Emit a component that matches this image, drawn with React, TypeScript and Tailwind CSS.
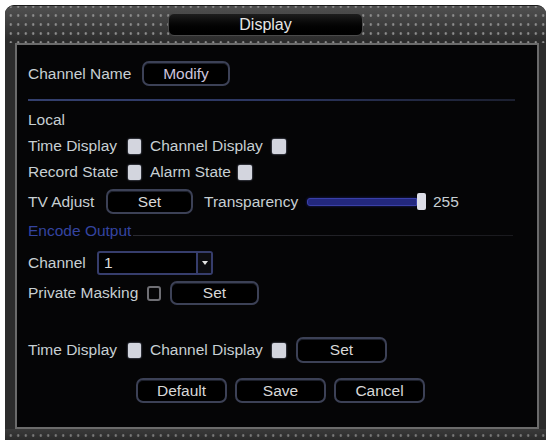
import React from 'react';

const font = "font-['Liberation_Sans',Arial,sans-serif]";

const Btn: React.FC<{ label: string; w: string; h?: string; tint?: string; className?: string }> = ({ label, w, h = 'h-[25px]', tint = 'text-[#d8d8d8]', className = '' }) => (
  <div className={`${w} ${h} ${tint} ${className} shrink-0 flex items-center justify-center rounded-[7px] border-2 border-[#3c4156] bg-black shadow-[inset_0_1px_0_#1c1f2a] text-[15.5px] leading-none`}>
    {label}
  </div>
);

const Check: React.FC<{ className?: string }> = ({ className = '' }) => (
  <div className={`w-[13px] h-[15px] shrink-0 rounded-[2px] bg-[#d3d5de] shadow-[0_0_2px_#9aa0b8] ${className}`} />
);

export default function App() {
  return (
    <div className={`w-[546px] h-[440px] bg-white pl-[5px] pt-[5px] overflow-hidden ${font}`}>
      <div className="w-[541px] h-[435px] rounded-t-[9px] bg-[#2c2c2c] flex flex-col overflow-hidden border-t border-[#1a1a1a]">
        {/* header */}
        <div className="h-[37px] shrink-0 bg-[radial-gradient(circle,#8e8e8e_1px,transparent_1.5px),linear-gradient(#505050,#2a2a2a)] bg-size-[7.5px_9px,100%_100%] bg-position-[2px_5px,0_0] flex items-center">
          <div className="ml-[163px] w-[195px] h-[23px] rounded-[6px] bg-gradient-to-b from-[#1e1e1e] to-black border border-[#4a4a4a] flex items-center justify-center text-[#e6e6e6] text-[16px]">
            Display
          </div>
        </div>

        {/* body */}
        <div className="ml-[10px] mr-[7px] h-[386px] shrink-0 border-2 border-[#6b6b6b] bg-[#050506] flex flex-col pl-[11px] text-[#c7cfd3] text-[15.5px] leading-[20px]">
          <div className="mt-[16px] h-[25px] flex items-center">
            <span className="w-[114px]">Channel Name</span>
            <Btn label="Modify" w="w-[88px]" tint="text-[#cdc3dd]" />
          </div>

          <div className="mt-[13px] h-[2px] w-[487px] bg-gradient-to-r from-[#34406e] via-[#2c3660] to-[#1c2030]" />

          <div className="mt-[9px] h-[20px]">Local</div>

          <div className="mt-[6px] h-[20px] flex items-center">
            <span className="w-[100px]">Time Display</span>
            <Check />
            <span className="ml-[9px] w-[122px]">Channel Display</span>
            <Check className="w-[14px]" />
          </div>

          <div className="mt-[6px] h-[20px] flex items-center">
            <span className="w-[100px]">Record State</span>
            <Check />
            <span className="ml-[9px] w-[88px]">Alarm State</span>
            <Check className="w-[14px]" />
          </div>

          <div className="mt-[7px] h-[25px] flex items-center">
            <span className="w-[78px]">TV Adjust</span>
            <Btn label="Set" w="w-[87px]" />
            <span className="ml-[11px] w-[103px]">Transparency</span>
            <div className="w-[110px] h-[8px] rounded-l-[3px] bg-[#23287e] border border-[#3a40a8] shadow-[0_0_3px_#1a1f6a]" />
            <div className="w-[9px] h-[17px] rounded-[2px] bg-[#dcdde6]" />
            <span className="ml-[7px]">255</span>
          </div>

          <div className="mt-[7px] h-[20px] flex items-center">
            <span className="text-[#3444a0]">Encode Output</span>
            <div className="ml-[2px] mt-[8px] w-[380px] h-[1px] bg-gradient-to-r from-[#2a2a30] to-[#1a1a1e]" />
          </div>

          <div className="mt-[10px] h-[24px] flex items-center">
            <span className="w-[69px]">Channel</span>
            <div className="w-[116px] h-[24px] rounded-[3px] border-2 border-[#363d6c] bg-black flex items-stretch">
              <span className="flex-1 pl-[5px] leading-[20px] text-[#dcdcdc]">1</span>
              <div className="w-[15px] border-l-2 border-[#363d6c] bg-[#0c0c10] flex items-center justify-center">
                <div className="w-0 h-0 border-l-[3px] border-r-[3px] border-t-[4px] border-l-transparent border-r-transparent border-t-[#e4e4e4]" />
              </div>
            </div>
          </div>

          <div className="mt-[6px] h-[24px] flex items-center">
            <span className="w-[119px]">Private Masking</span>
            <div className="w-[14px] h-[15px] rounded-[3px] border-2 border-[#6f6f74]" />
            <Btn label="Set" w="w-[89px]" h="h-[24px]" className="ml-[9px]" />
          </div>

          <div className="mt-[32px] h-[26px] flex items-center">
            <span className="w-[100px]">Time Display</span>
            <Check />
            <span className="ml-[9px] w-[122px]">Channel Display</span>
            <Check className="w-[14px]" />
            <Btn label="Set" w="w-[91px]" h="h-[26px]" className="ml-[10px]" />
          </div>

          <div className="mt-[15px] h-[25px] flex items-center pl-[108px] gap-[8px]">
            <Btn label="Default" w="w-[91px]" />
            <Btn label="Save" w="w-[91px]" />
            <Btn label="Cancel" w="w-[91px]" />
          </div>
        </div>

        {/* bottom strip */}
        <div className="flex-1 bg-[radial-gradient(circle,#7a7a7a_1px,transparent_1.5px),linear-gradient(#3a3a3a,#2a2a2a)] bg-size-[7.5px_9px,100%_100%] bg-position-[2px_2px,0_0]" />
      </div>
    </div>
  );
}
